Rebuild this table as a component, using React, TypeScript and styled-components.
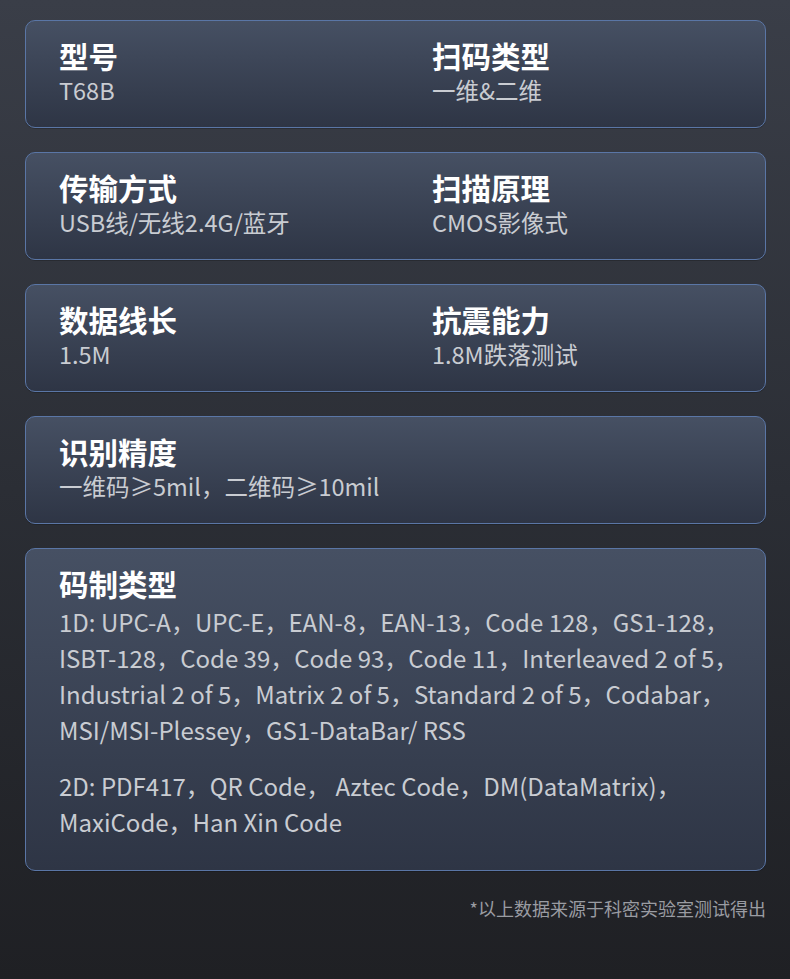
import React from 'react';
import styled, { createGlobalStyle } from 'styled-components';

const GlobalStyle = createGlobalStyle`
  html, body {
    margin: 0;
    padding: 0;
    background: #1f2024;
  }
  body {
    font-family: "Noto Sans CJK SC", "Noto Sans", sans-serif;
  }
`;

const Page = styled.div`
  width: 790px;
  min-height: 979px;
  box-sizing: border-box;
  padding: 20px 24px 0 25px;
  background: linear-gradient(180deg, #3a3e48 0%, #2b2e35 50%, #1f2024 100%);
  display: flex;
  flex-direction: column;
  gap: 24px;
`;

const Card = styled.div<{ $bottom?: number }>`
  box-sizing: border-box;
  border: 1.5px solid #5a76a6;
  border-radius: 10px;
  background: linear-gradient(180deg, #465063 0%, #2e3545 100%);
  padding: 16px 20px ${({ $bottom }) => $bottom ?? 21}px 33px;
  box-shadow: 0 1px 0 rgba(0, 0, 0, 0.2);
`;

const Row = styled.div`
  display: grid;
  grid-template-columns: 373px 1fr;
`;

const Title = styled.div`
  font-size: 29.5px;
  font-weight: 700;
  color: #ffffff;
  line-height: 37px;
`;

const Value = styled.div`
  font-size: 23.5px;
  color: #c9ccd2;
  line-height: 32px;
  white-space: nowrap;
`;

const Para = styled.div<{ $gap?: number }>`
  font-size: 24px;
  color: #c9ccd2;
  line-height: 36px;
  white-space: nowrap;
  margin-top: ${({ $gap }) => $gap ?? 0}px;
`;

const Footer = styled.div`
  text-align: right;
  font-size: 18px;
  color: #9a9ca2;
  margin-top: 1px;
  line-height: 24px;
`;

const pairs = [
  [['型号', 'T68B'], ['扫码类型', '一维&二维']],
  [['传输方式', 'USB线/无线2.4G/蓝牙'], ['扫描原理', 'CMOS影像式']],
  [['数据线长', '1.5M'], ['抗震能力', '1.8M跌落测试']],
];

const App: React.FC = () => (
  <>
    <GlobalStyle />
    <Page>
      {pairs.map((row, i) => (
        <Card key={i}>
          <Row>
            {row.map(([t, v]) => (
              <div key={t}>
                <Title>{t}</Title>
                <Value>{v}</Value>
              </div>
            ))}
          </Row>
        </Card>
      ))}
      <Card>
        <Title>识别精度</Title>
        <Value>一维码≥5mil，二维码≥10mil</Value>
      </Card>
      <Card $bottom={30}>
        <Title>码制类型</Title>
        <Para $gap={2}>
          1D: UPC-A，UPC-E，EAN-8，EAN-13，Code 128，GS1-128，<br />
          ISBT-128，Code 39，Code 93，Code 11，Interleaved 2 of 5，<br />
          Industrial 2 of 5，Matrix 2 of 5，Standard 2 of 5，Codabar，<br />
          MSI/MSI-Plessey，GS1-DataBar/ RSS
        </Para>
        <Para $gap={20}>
          2D: PDF417，QR Code， Aztec Code，DM(DataMatrix)，<br />
          MaxiCode，Han Xin Code
        </Para>
      </Card>
      <Footer>*以上数据来源于科密实验室测试得出</Footer>
    </Page>
  </>
);

export default App;
